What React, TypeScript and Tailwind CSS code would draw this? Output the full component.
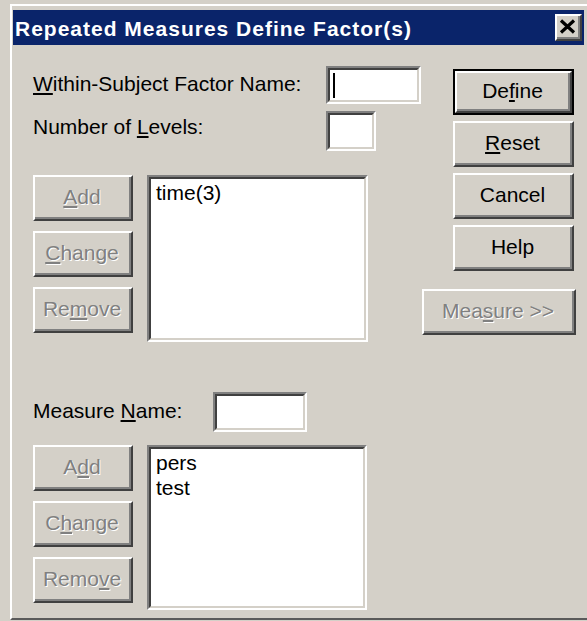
import React from "react";

const FONT = "font-['Liberation_Sans',Arial,sans-serif]";

function Raised({
  className = "",
  children,
}: {
  className?: string;
  children?: React.ReactNode;
}) {
  return (
    <div
      className={`border-2 border-t-white border-l-white border-r-[#404040] border-b-[#404040] bg-[#d4d0c8] ${className}`}
    >
      <div className="w-full h-full border-r-2 border-b-2 border-[#808080] flex items-center justify-center">
        {children}
      </div>
    </div>
  );
}

function Sunken({
  className = "",
  children,
}: {
  className?: string;
  children?: React.ReactNode;
}) {
  return (
    <div
      className={`border-2 border-t-[#808080] border-l-[#808080] border-r-white border-b-white ${className}`}
    >
      <div className="w-full h-full border-2 border-t-[#404040] border-l-[#404040] border-r-[#d4d0c8] border-b-[#d4d0c8] bg-white">
        {children}
      </div>
    </div>
  );
}

function Label({ children }: { children: React.ReactNode }) {
  return <span className="text-[21px] leading-[24px] text-black">{children}</span>;
}

function Caption({
  children,
  disabled,
}: {
  children: React.ReactNode;
  disabled?: boolean;
}) {
  return (
    <span
      className={
        disabled
          ? "text-[21px] leading-[24px] text-[#808080] [text-shadow:1px_1px_0_#ffffff]"
          : "text-[21px] leading-[24px] text-black"
      }
    >
      {children}
    </span>
  );
}

function SideButtons({ mn }: { mn: [string, string, string][] }) {
  return (
    <div className="flex flex-col gap-[10px] w-[100px] shrink-0">
      {mn.map(([a, u, b]) => (
        <Raised key={a + u + b} className="h-[46px] w-[100px]">
          <Caption disabled>
            {a}
            <u>{u}</u>
            {b}
          </Caption>
        </Raised>
      ))}
    </div>
  );
}

function ListBox({
  items,
  className,
}: {
  items: string[];
  className: string;
}) {
  return (
    <Sunken className={className}>
      <div className="pl-[5px] pt-[1px] flex flex-col">
        {items.map((it) => (
          <span key={it} className="text-[21px] leading-[25px] text-black">
            {it}
          </span>
        ))}
      </div>
    </Sunken>
  );
}

export default function App() {
  return (
    <div className={`w-[587px] h-[621px] overflow-hidden bg-[#d4d0c8] ${FONT}`}>
      {/* dialog window frame */}
      <div className="ml-[10px] mt-[4px] w-[590px] h-[616px] border-t-2 border-l-2 border-t-white border-l-white border-b-2 border-b-[#5a5a5a] pt-[4px] pl-[1px]">
        {/* title bar */}
        <div className="h-[35px] w-[571px] bg-[#0a246a] flex items-center justify-between pl-[2px] pr-[2px]">
          <span className="text-white font-bold text-[21px] tracking-[1px] leading-[24px] pt-[2px]">
            Repeated Measures Define Factor(s)
          </span>
          <Raised className="w-[27px] h-[27px]">
            <svg width="17" height="15" viewBox="0 0 17 15">
              <path d="M2 1.5 L15 13.5 M15 1.5 L2 13.5" stroke="#000" strokeWidth="3.2" />
            </svg>
          </Raised>
        </div>

        {/* dialog body */}
        <div className="flex pl-[20px]">
          {/* left side: names, levels and lists */}
          <div className="w-[389px] shrink-0 pt-[21px] flex flex-col">
            <div className="flex items-center h-[38px]">
              <div className="w-[293px] shrink-0">
                <Label>
                  <u>W</u>ithin-Subject Factor Name:
                </Label>
              </div>
              <Sunken className="w-[95px] h-[38px]">
                <div className="h-full flex items-center pl-[3px]">
                  <div className="w-[2px] h-[25px] bg-black" />
                </div>
              </Sunken>
            </div>
            <div className="flex items-start h-[40px] mt-[7px]">
              <div className="w-[293px] shrink-0 mt-[4px]">
                <Label>
                  Number of <u>L</u>evels:
                </Label>
              </div>
              <Sunken className="w-[50px] h-[40px]" />
            </div>

            <div className="flex mt-[24px]">
              <SideButtons
                mn={[
                  ["", "A", "dd"],
                  ["", "C", "hange"],
                  ["Re", "m", "ove"],
                ]}
              />
              <ListBox items={["time(3)"]} className="ml-[14px] w-[221px] h-[167px]" />
            </div>

            <div className="flex items-center h-[40px] mt-[50px]">
              <div className="w-[180px] shrink-0">
                <Label>
                  Measure <u>N</u>ame:
                </Label>
              </div>
              <Sunken className="w-[94px] h-[40px]" />
            </div>

            <div className="flex mt-[13px]">
              <SideButtons
                mn={[
                  ["A", "d", "d"],
                  ["C", "h", "ange"],
                  ["Remo", "v", "e"],
                ]}
              />
              <ListBox items={["pers", "test"]} className="ml-[14px] w-[220px] h-[165px]" />
            </div>
          </div>

          {/* right side: command buttons */}
          <div className="w-[154px] shrink-0 pt-[24px] flex flex-col">
            <div className="ml-[31px] flex flex-col gap-[6px]">
              <div className="w-[121px] h-[46px] border-2 border-black">
                <Raised className="w-full h-full">
                  <Caption>
                    De<u>f</u>ine
                  </Caption>
                </Raised>
              </div>
              <Raised className="w-[121px] h-[46px]">
                <Caption>
                  <u>R</u>eset
                </Caption>
              </Raised>
              <Raised className="w-[121px] h-[46px]">
                <Caption>Cancel</Caption>
              </Raised>
              <Raised className="w-[121px] h-[46px]">
                <Caption>Help</Caption>
              </Raised>
            </div>
            <Raised className="w-[154px] h-[46px] mt-[18px]">
              <Caption disabled>
                Mea<u>s</u>ure &gt;&gt;
              </Caption>
            </Raised>
          </div>
        </div>
      </div>
    </div>
  );
}
